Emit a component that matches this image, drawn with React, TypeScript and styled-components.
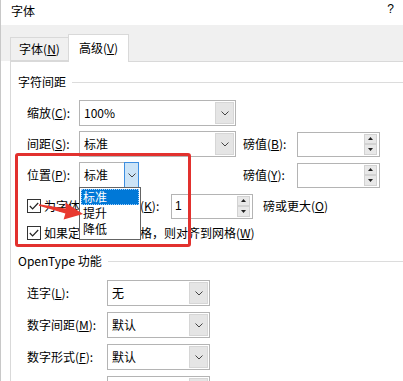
import React from "react";
import styled, { createGlobalStyle } from "styled-components";

const Global = createGlobalStyle`
  html, body { margin: 0; padding: 0; background: #fff; }
  body {
    font-family: "Microsoft YaHei", "Noto Sans CJK SC", "Noto Sans", sans-serif;
    font-size: 12px;
    line-height: 16px;
    color: #000;
  }
`;

const Window = styled.div`
  position: relative;
  width: 402px;
  height: 381px;
  overflow: hidden;
  border-left: 1px solid #c8c8c8;
  background: #fff;
  display: flex;
  flex-direction: column;
`;

const TitleBar = styled.div`
  height: 25px;
  flex: none;
  display: flex;
  align-items: center;
  justify-content: space-between;
  padding: 0 9px 3px 10px;
  box-sizing: border-box;
`;

const Help = styled.span`
  font-family: "Liberation Sans", Arial, sans-serif;
  font-size: 12px;
  margin-top: -4px;
`;

const TabStrip = styled.div`
  height: 36px;
  flex: none;
  background: #f0f0f0;
  display: flex;
  align-items: flex-end;
  padding-left: 9px;
`;

const Tab = styled.div<{ $active?: boolean }>`
  position: relative;
  z-index: ${(p) => (p.$active ? 2 : 1)};
  box-sizing: border-box;
  height: ${(p) => (p.$active ? 28 : 24)}px;
  width: ${(p) => (p.$active ? 61 : 59)}px;
  margin-left: ${(p) => (p.$active ? -1 : 0)}px;
  margin-bottom: ${(p) => (p.$active ? -1 : 0)}px;
  background: ${(p) => (p.$active ? "#fff" : "#f0f0f0")};
  border: 1px solid #d9d9d9;
  border-bottom: ${(p) => (p.$active ? "none" : "1px solid #d9d9d9")};
  display: flex;
  align-items: center;
  justify-content: center;
  padding-bottom: ${(p) => (p.$active ? 2 : 0)}px;
`;

const Panel = styled.div`
  flex: 1;
  margin-left: 9px;
  border-top: 1px solid #d9d9d9;
  border-left: 1px solid #d9d9d9;
  padding: 12px 0 0 16px;
  display: flex;
  flex-direction: column;
`;

const Heading = styled.div<{ $top?: number }>`
  display: flex;
  align-items: center;
  gap: 6px;
  height: 16px;
  margin-left: -9px;
  margin-top: ${(p) => p.$top ?? 0}px;
  white-space: nowrap;
  &::after {
    content: "";
    flex: 1;
    height: 1px;
    background: #dcdcdc;
  }
`;

const Rows = styled.div<{ $top: number; $gap: number }>`
  display: flex;
  flex-direction: column;
  gap: ${(p) => p.$gap}px;
  margin-top: ${(p) => p.$top}px;
`;

const Row = styled.div<{ $label: number; $h?: number }>`
  display: grid;
  grid-template-columns: ${(p) => p.$label}px auto;
  align-items: center;
  height: ${(p) => p.$h ?? 26}px;
  white-space: nowrap;
`;

const SpacingRow = styled.div`
  display: grid;
  grid-template-columns: 52px 157px 7px 54px 83px;
  align-items: center;
  height: 26px;
  white-space: nowrap;
`;

const Acc = styled.span`
  text-decoration: underline;
  text-underline-offset: 1px;
`;

const ComboBox = styled.div<{ $w: number }>`
  position: relative;
  box-sizing: border-box;
  width: ${(p) => p.$w}px;
  height: 26px;
  border: 1px solid #b4b4b4;
  background: #fff;
  display: flex;
  align-items: stretch;
`;

const ComboText = styled.div`
  flex: 1;
  display: flex;
  align-items: center;
  padding-left: 4px;
`;

const DropButton = styled.div<{ $hot?: boolean }>`
  width: ${(p) => (p.$hot ? 15 : 19)}px;
  box-sizing: border-box;
  margin: ${(p) => (p.$hot ? "-1px -1px -1px 0" : "1px 1px 1px 0")};
  background: ${(p) => (p.$hot ? "#cce4f7" : "#e5e5e5")};
  border: 1px solid ${(p) => (p.$hot ? "#3d8ee0" : "#d6d6d6")};
  display: flex;
  align-items: center;
  justify-content: center;
`;

const Chevron = () => (
  <svg width="8" height="5" viewBox="0 0 8 5">
    <polyline points="0.5,0.5 4,4 7.5,0.5" fill="none" stroke="#444" strokeWidth="1" />
  </svg>
);

const ListBox = styled.div`
  position: absolute;
  z-index: 5;
  left: -1px;
  top: 100%;
  width: 62px;
  box-sizing: border-box;
  border: 1px solid #646464;
  background: #fff;
  padding: 1px 0 2px;
`;

const ListItem = styled.div<{ $sel?: boolean }>`
  height: 16px;
  line-height: 16px;
  padding-left: 2px;
  margin: 0 1px;
  background: ${(p) => (p.$sel ? "#0078d7" : "transparent")};
  color: ${(p) => (p.$sel ? "#fff" : "#000")};
  outline: ${(p) => (p.$sel ? "1px dotted #9fd0ff" : "none")};
  outline-offset: -1px;
`;

const Spinner = styled.div<{ $w: number }>`
  box-sizing: border-box;
  width: ${(p) => p.$w}px;
  height: 25px;
  border: 1px solid #b4b4b4;
  background: #fff;
  display: flex;
  justify-content: flex-end;
  padding: 1px 2px 1px 0;
`;

const SpinColumn = styled.div`
  width: 13px;
  display: flex;
  flex-direction: column;
`;

const SpinHalf = styled.div`
  flex: 1;
  box-sizing: border-box;
  background: #e8e8e8;
  border: 1px solid #d2d2d2;
  display: flex;
  align-items: center;
  justify-content: center;
`;

const Tri = ({ up }: { up?: boolean }) => (
  <svg width="5" height="3" viewBox="0 0 5 3">
    <polygon points={up ? "0,3 5,3 2.5,0" : "0,0 5,0 2.5,3"} fill="#222" />
  </svg>
);

const SpinValue = styled.div`
  flex: 1;
  display: flex;
  align-items: center;
  padding-left: 3px;
  font-family: "Liberation Sans", Arial, sans-serif;
  font-size: 12px;
`;

const SpinBox = ({ w, value }: { w: number; value?: string }) => (
  <Spinner $w={w}>
    {value && <SpinValue>{value}</SpinValue>}
    <SpinColumn>
      <SpinHalf>
        <Tri up />
      </SpinHalf>
      <SpinHalf>
        <Tri />
      </SpinHalf>
    </SpinColumn>
  </Spinner>
);

const CheckRow = styled.div<{ $top: number; $h: number }>`
  display: flex;
  align-items: center;
  height: ${(p) => p.$h}px;
  margin-top: ${(p) => p.$top}px;
  white-space: nowrap;
`;

const CheckBox = styled.div`
  width: 14px;
  height: 14px;
  box-sizing: border-box;
  border: 1px solid #333;
  background: #fff;
  margin-right: 3px;
  display: flex;
  align-items: center;
  justify-content: center;
`;

const Check = () => (
  <svg width="10" height="8" viewBox="0 0 10 8">
    <polyline points="0.8,4 3.6,6.8 9.2,1" fill="none" stroke="#222" strokeWidth="1.2" />
  </svg>
);

const KLabel = styled.span`
  width: 127px;
`;

const AfterLabel = styled.span`
  margin-left: 10px;
`;

const RedFrame = styled.div`
  position: absolute;
  z-index: 8;
  left: 14px;
  top: 153px;
  width: 176px;
  height: 94px;
  box-sizing: border-box;
  border: 3px solid #e2312e;
  border-radius: 3px;
  pointer-events: none;
`;

const ArrowMark = styled.svg`
  position: absolute;
  z-index: 9;
  left: 30px;
  top: 195px;
  pointer-events: none;
`;

const Combo = ({ w, text, hot, children }: { w: number; text: string; hot?: boolean; children?: React.ReactNode }) => (
  <ComboBox $w={w}>
    <ComboText>{text}</ComboText>
    <DropButton $hot={hot}>
      <Chevron />
    </DropButton>
    {children}
  </ComboBox>
);

export default function App() {
  return (
    <>
      <Global />
      <Window>
        <TitleBar>
          <span>字体</span>
          <Help>?</Help>
        </TitleBar>
        <TabStrip>
          <Tab>
            字体(<Acc>N</Acc>)
          </Tab>
          <Tab $active>
            高级(<Acc>V</Acc>)
          </Tab>
        </TabStrip>
        <Panel>
          <Heading>字符间距</Heading>
          <Rows $top={10} $gap={5}>
            <SpacingRow>
              <span>
                缩放(<Acc>C</Acc>):
              </span>
              <Combo w={157} text="100%" />
            </SpacingRow>
            <SpacingRow>
              <span>
                间距(<Acc>S</Acc>):
              </span>
              <Combo w={157} text="标准" />
              <span />
              <span>
                磅值(<Acc>B</Acc>):
              </span>
              <SpinBox w={83} />
            </SpacingRow>
            <SpacingRow>
              <span>
                位置(<Acc>P</Acc>):
              </span>
              <Combo w={60} text="标准" hot>
                <ListBox>
                  <ListItem $sel>标准</ListItem>
                  <ListItem>提升</ListItem>
                  <ListItem>降低</ListItem>
                </ListBox>
              </Combo>
              <span />
              <span>
                磅值(<Acc>Y</Acc>):
              </span>
              <SpinBox w={83} />
            </SpacingRow>
          </Rows>
          <CheckRow $top={6} $h={24}>
            <CheckBox>
              <Check />
            </CheckBox>
            <KLabel>
              为字体调整字间距(<Acc>K</Acc>):
            </KLabel>
            <SpinBox w={82} value="1" />
            <AfterLabel>
              磅或更大(<Acc>O</Acc>)
            </AfterLabel>
          </CheckRow>
          <CheckRow $top={7} $h={16}>
            <CheckBox>
              <Check />
            </CheckBox>
            <span>
              如果定义了文档网格，则对齐到网格(<Acc>W</Acc>)
            </span>
          </CheckRow>
          <Heading $top={12}>OpenType 功能</Heading>
          <Rows $top={11} $gap={6}>
            <Row $label={80}>
              <span>
                连字(<Acc>L</Acc>):
              </span>
              <Combo w={103} text="无" />
            </Row>
            <Row $label={80}>
              <span>
                数字间距(<Acc>M</Acc>):
              </span>
              <Combo w={103} text="默认" />
            </Row>
            <Row $label={80}>
              <span>
                数字形式(<Acc>F</Acc>):
              </span>
              <Combo w={103} text="默认" />
            </Row>
            <Row $label={80}>
              <span />
              <Combo w={103} text="" />
            </Row>
          </Rows>
        </Panel>
        <RedFrame />
        <ArrowMark width="60" height="30" viewBox="30 195 60 30">
          <polygon
            points="38.2,204.3 64.6,208.4 64.4,202.6 82,214 62.6,219.6 64.4,213.4 37.8,205.7"
            fill="#e8392f"
          />
        </ArrowMark>
      </Window>
    </>
  );
}
